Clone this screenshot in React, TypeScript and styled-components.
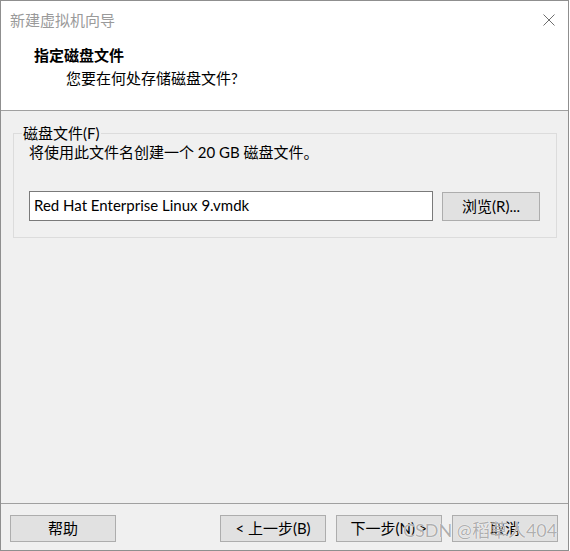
import styled, { createGlobalStyle } from "styled-components";

const font = `Lato, "Noto Sans CJK SC", sans-serif`;

const GlobalStyle = createGlobalStyle`
  html, body {
    margin: 0;
    padding: 0;
    background: #ffffff;
  }
  body {
    font-family: ${font};
    font-size: 15px;
    color: #000000;
  }
`;

export default function App() {
  return (
    <>
      <GlobalStyle />
      <Window>
        <TitleBar>
          <Caption>新建虚拟机向导</Caption>
          <CloseButton aria-label="关闭">
            <svg width="12" height="12" viewBox="0 0 12 12">
              <path d="M0.5 0.5 L11.5 11.5 M11.5 0.5 L0.5 11.5" stroke="#6e6e6e" strokeWidth="1" fill="none" />
            </svg>
          </CloseButton>
        </TitleBar>
        <Header>
          <HeaderTitle>指定磁盘文件</HeaderTitle>
          <HeaderSub>您要在何处存储磁盘文件?</HeaderSub>
        </Header>
        <Body>
          <Group>
            <Legend>磁盘文件(F)</Legend>
            <Info>将使用此文件名创建一个 20 GB 磁盘文件。</Info>
            <FileRow>
              <FileInput defaultValue="Red Hat Enterprise Linux 9.vmdk" />
              <Button $width={98} $height={29}>浏览(R)...</Button>
            </FileRow>
          </Group>
        </Body>
        <Footer>
          <Button $width={106} $height={27}>帮助</Button>
          <Spacer />
          <NavGroup>
            <Button $width={106} $height={27}>&lt; 上一步(B)</Button>
            <Button $width={106} $height={27}>下一步(N) &gt;</Button>
            <Button $width={106} $height={27}>取消</Button>
          </NavGroup>
        </Footer>
        <Watermark>CSDN @稻草人404</Watermark>
      </Window>
    </>
  );
}

const Window = styled.div`
  position: relative;
  width: 569px;
  height: 551px;
  box-sizing: border-box;
  border: 1px solid #8f8f8f;
  display: flex;
  flex-direction: column;
  background: #f0f0f0;
  overflow: hidden;
`;

const TitleBar = styled.div`
  height: 38px;
  flex: none;
  background: #ffffff;
  display: flex;
  align-items: center;
  justify-content: space-between;
  padding: 0 13px 0 9px;
`;

const Caption = styled.span`
  color: #9a9a9a;
  font-size: 15px;
  line-height: 20px;
`;

const CloseButton = styled.div`
  width: 12px;
  height: 12px;
  display: flex;
  margin-top: -1px;
`;

const Header = styled.div`
  height: 72px;
  flex: none;
  box-sizing: border-box;
  background: #ffffff;
  border-bottom: 1px solid #a0a0a0;
  padding: 6px 0 0 33px;
`;

const HeaderTitle = styled.div`
  font-weight: bold;
  font-size: 15px;
  line-height: 20px;
`;

const HeaderSub = styled.div`
  margin: 3px 0 0 32px;
  font-size: 15px;
  line-height: 20px;
`;

const Body = styled.div`
  flex: 1;
  padding-top: 13px;
`;

const Group = styled.fieldset`
  margin: 0 11px 0 12px;
  padding: 0 15px 16px 15px;
  border: 1px solid #dcdcdc;
  min-width: 0;
`;

const Legend = styled.legend`
  margin-left: -7px;
  padding: 0 1px;
  font-size: 15px;
  line-height: 18px;
`;

const Info = styled.div`
  font-size: 15px;
  line-height: 18px;
  margin-top: 1px;
`;

const FileRow = styled.div`
  display: flex;
  align-items: flex-start;
  gap: 9px;
  margin-top: 30px;
`;

const FileInput = styled.input`
  width: 404px;
  height: 30px;
  box-sizing: border-box;
  border: 1px solid #7a7a7a;
  background: #ffffff;
  padding: 0 4px 2px;
  font-family: ${font};
  font-size: 15px;
  color: #000000;
  outline: none;
`;

const Button = styled.button<{ $width: number; $height: number }>`
  width: ${(p) => p.$width}px;
  height: ${(p) => p.$height}px;
  box-sizing: border-box;
  border: 1px solid #adadad;
  background: #e1e1e1;
  font-family: ${font};
  font-size: 15px;
  line-height: 18px;
  color: #000000;
  padding: 0 0 2px;
  margin-top: 1px;
  display: flex;
  align-items: center;
  justify-content: center;
`;

const Footer = styled.div`
  height: 47px;
  flex: none;
  box-sizing: border-box;
  border-top: 1px solid #a0a0a0;
  display: flex;
  align-items: flex-start;
  padding: 10px 10px 0 9px;
`;

const Spacer = styled.div`
  flex: 1;
`;

const NavGroup = styled.div`
  display: flex;
  gap: 10px;
`;

const Watermark = styled.div`
  position: absolute;
  left: 402px;
  top: 517px;
  font-family: ${font};
  font-size: 18px;
  line-height: 24px;
  color: rgba(140, 140, 140, 0.7);
  text-shadow: 0 0 1px #ffffff, 0 0 1px #ffffff;
  pointer-events: none;
  white-space: nowrap;
`;
